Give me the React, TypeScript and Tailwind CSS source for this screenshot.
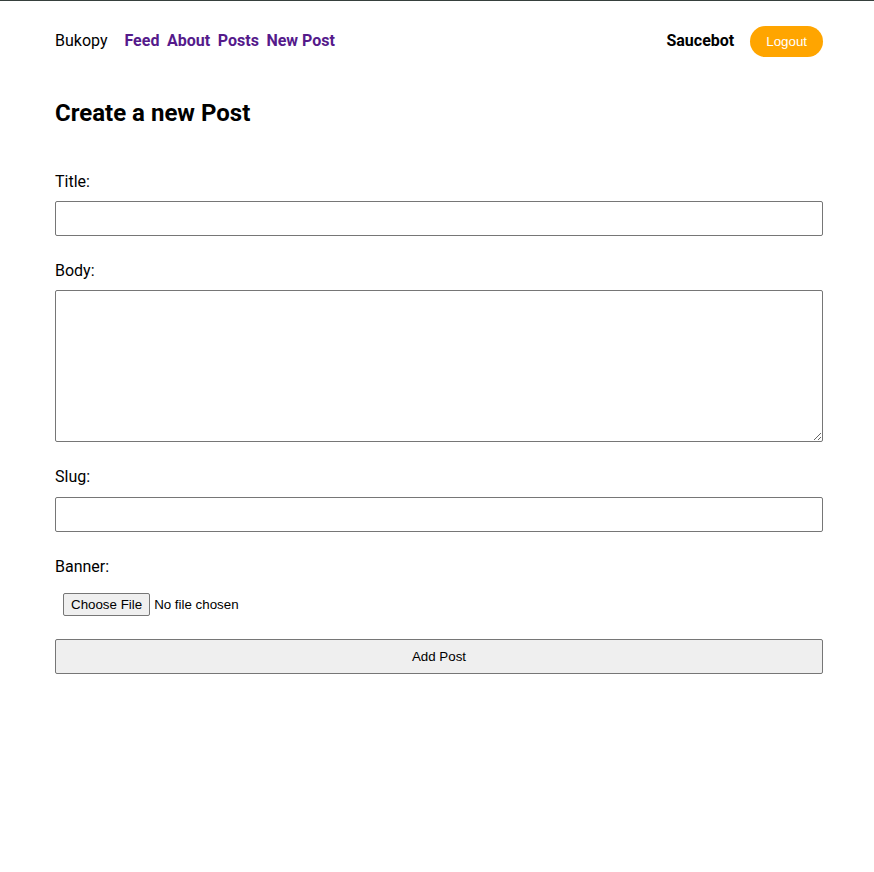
import React from "react";

export default function App() {
  return (
    <div className="min-h-[872px] bg-white border-t border-[#36403d] text-black" style={{ fontFamily: "Roboto, 'Noto Sans', sans-serif" }}>
      <div className="w-[768px] ml-[55px]">
        <header className="h-[80px] flex items-center justify-between">
          <nav className="flex items-center text-base leading-6">
            <span className="mr-[17px]">Bukopy</span>
            <div className="flex items-center gap-[7.6px] font-bold text-[#551a8b]">
              <a href="#">Feed</a>
              <a href="#">About</a>
              <a href="#">Posts</a>
              <a href="#">New Post</a>
            </div>
          </nav>
          <div className="flex items-center gap-4">
            <span className="font-bold text-base">Saucebot</span>
            <button
              className="h-[31px] px-4 pt-[2px] rounded-full bg-[#ffa500] text-white text-[13.333px]"
              style={{ fontFamily: "'Liberation Sans', Arial, sans-serif" }}
            >
              Logout
            </button>
          </div>
        </header>
        <h1 className="mt-4 text-2xl leading-8 font-bold">Create a new Post</h1>
        <form className="mt-[41px] flex flex-col">
          <label className="block text-base leading-6 mb-[7px]">Title:</label>
          <input type="text" className="h-[35px] w-full border border-[#767676] rounded-[2px]" />
          <label className="block text-base leading-6 mt-[23px] mb-[7px]">Body:</label>
          <textarea className="h-[152px] w-full border border-[#767676] rounded-[2px] resize-y" />
          <label className="block text-base leading-6 mt-[23px] mb-2">Slug:</label>
          <input type="text" className="h-[35px] w-full border border-[#767676] rounded-[2px]" />
          <label className="block text-base leading-6 mt-[23px] mb-[5px]">Banner:</label>
          <div className="p-2">
            <input
              type="file"
              className="text-[13.333px] leading-[19px] file:bg-[#efefef] file:border file:border-[#767676] file:rounded-[2px] file:px-[7px] file:py-[1px] file:mr-1 file:text-black"
              style={{ fontFamily: "'Liberation Sans', Arial, sans-serif" }}
            />
          </div>
          <button
            type="button"
            className="mt-[15px] h-[35px] w-full bg-[#efefef] border border-[#767676] rounded-[2px] text-[13.333px] text-black"
            style={{ fontFamily: "'Liberation Sans', Arial, sans-serif" }}
          >
            Add Post
          </button>
        </form>
      </div>
    </div>
  );
}
